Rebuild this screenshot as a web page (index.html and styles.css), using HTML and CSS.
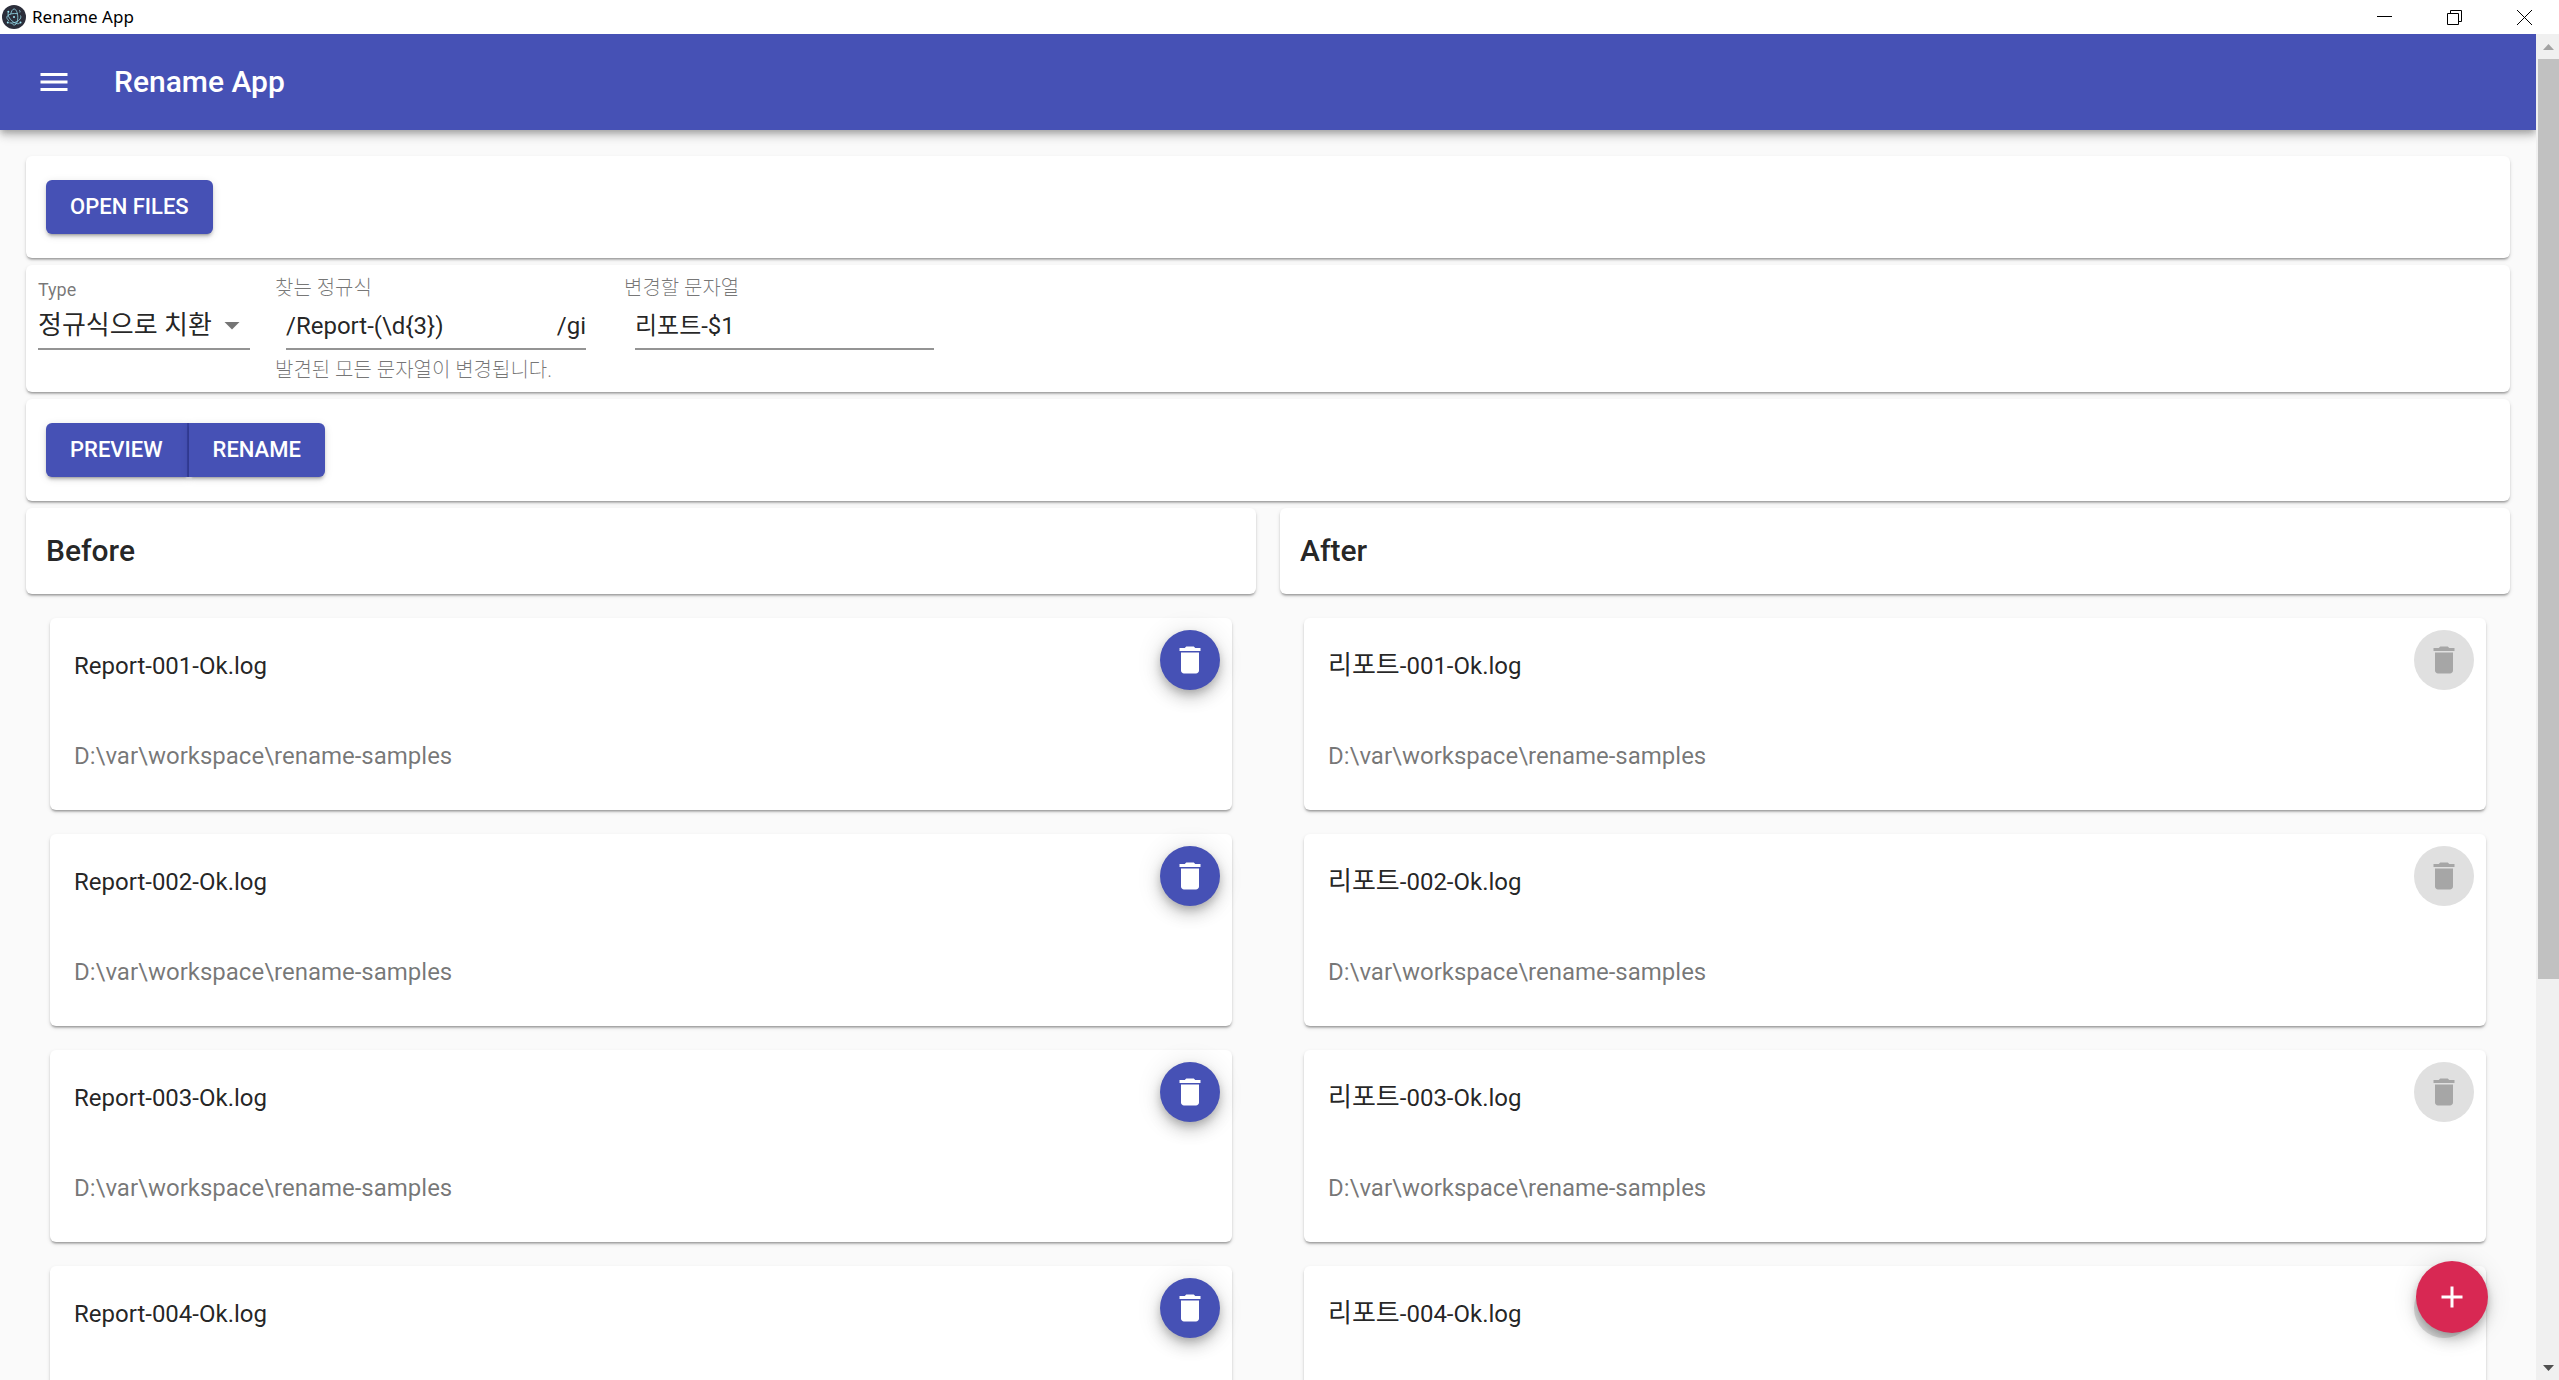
FILE: index.html
```html
<!DOCTYPE html>
<html lang="ko">
<head>
<meta charset="utf-8">
<title>Rename App</title>
<link rel="stylesheet" href="styles.css">
</head>
<body>
<svg class="sprite" aria-hidden="true">
  <symbol id="trash" viewBox="0 0 24 24"><path d="M6 19c0 1.100.9 2 2 2h8c1.100 0 2-.9 2-2V7H6v12zM19 4h-3.500l-1-1h-5l-1 1H5v2h14V4z"/></symbol>
</svg>
<div class="titlebar">
  <svg class="app-icon" viewBox="0 0 24 24" aria-hidden="true">
    <circle cx="12" cy="12" r="12" fill="#2b2e3a"/>
    <g fill="none" stroke="#9feaf9" stroke-opacity=".75" stroke-width="1">
      <path d="M15.500 8.700C11.500 8 7.200 8.900 5.300 11c-1.100 1.400-.2 3.400 1.900 5"/>
      <path d="M6.300 7.500C5 10.600 8.500 15.600 13 18c2 .9 3.800 1 4.600.2"/>
      <path d="M18.500 10.500c1.200 2.200-.8 4.900-4.500 6.500-2.200.9-4.600 1.100-6.500.9"/>
      <path d="M8.700 9.200c.7-3.300 2-5.200 3.400-5.200 2 0 3.700 4 3.700 8.500 0 4-1.500 7.500-3.500 7.500-1 0-1.900-.7-2.600-2"/>
      <path d="M17.800 7.500c.5-1.200.2-2-.6-2.200"/>
    </g>
    <g fill="#9feaf9"><circle cx="12" cy="12" r="1"/><circle cx="6.300" cy="6.800" r="1"/><circle cx="18.500" cy="17.500" r="1"/><circle cx="5.800" cy="17.500" r="1"/></g>
  </svg>
  <span class="titlebar-text">Rename App</span>
  <div class="window-controls">
    <button type="button" aria-label="Minimize"><svg width="15" height="15" viewBox="0 0 15 15"><path d="M0 6.500h15"/></svg></button>
    <button type="button" aria-label="Restore"><svg width="15" height="15" viewBox="0 0 15 15"><path d="M.5 3.500h11v11H.5zM3.500 3.500v-3h11v11h-3"/></svg></button>
    <button type="button" aria-label="Close"><svg width="15" height="15" viewBox="0 0 15 15"><path d="M0 0l15 15M15 0L0 15"/></svg></button>
  </div>
</div>
<div class="window">
  <div class="view">
    <header class="appbar">
      <button type="button" class="menu" aria-label="Menu"><svg width="36" height="36" viewBox="0 0 24 24"><path d="M3 18h18v-2H3v2zm0-5h18v-2H3v2zm0-7v2h18V6H3z"/></svg></button>
      <h1>Rename App</h1>
    </header>
    <main>
      <section class="card actions"><button type="button" class="btn">OPEN FILES</button></section>
      <section class="card form">
        <div class="field type">
          <label for="type">Type</label>
          <div class="select">
            <select id="type"><option>정규식으로 치환</option></select>
            <svg width="36" height="36" viewBox="0 0 24 24" aria-hidden="true"><path d="M7 10l5 5 5-5z"/></svg>
          </div>
        </div>
        <div class="field find">
          <label for="find" class="ko">찾는 정규식</label>
          <div class="input"><span>/</span><input id="find" type="text" value="Report-(\d{3})"><span>/gi</span></div>
          <p class="ko">발견된 모든 문자열이 변경됩니다.</p>
        </div>
        <div class="field replace">
          <label for="replace" class="ko">변경할 문자열</label>
          <div class="input"><input id="replace" type="text" value="리포트-$1"></div>
        </div>
      </section>
      <section class="card actions"><div class="group"><button type="button" class="btn">PREVIEW</button><button type="button" class="btn">RENAME</button></div></section>
      <div class="columns">
        <section class="column">
          <h2 class="card">Before</h2>
          <ul>
            <li class="card item"><h3>Report-001-Ok.log</h3><p>D:\var\workspace\rename-samples</p><button type="button" class="delete" aria-label="Delete"><svg><use href="#trash"/></svg></button></li>
            <li class="card item"><h3>Report-002-Ok.log</h3><p>D:\var\workspace\rename-samples</p><button type="button" class="delete" aria-label="Delete"><svg><use href="#trash"/></svg></button></li>
            <li class="card item"><h3>Report-003-Ok.log</h3><p>D:\var\workspace\rename-samples</p><button type="button" class="delete" aria-label="Delete"><svg><use href="#trash"/></svg></button></li>
            <li class="card item"><h3>Report-004-Ok.log</h3><button type="button" class="delete" aria-label="Delete"><svg><use href="#trash"/></svg></button></li>
          </ul>
        </section>
        <section class="column">
          <h2 class="card">After</h2>
          <ul>
            <li class="card item"><h3><span class="hangul">리포트</span>-001-Ok.log</h3><p>D:\var\workspace\rename-samples</p><button type="button" class="delete" aria-label="Delete" disabled><svg><use href="#trash"/></svg></button></li>
            <li class="card item"><h3><span class="hangul">리포트</span>-002-Ok.log</h3><p>D:\var\workspace\rename-samples</p><button type="button" class="delete" aria-label="Delete" disabled><svg><use href="#trash"/></svg></button></li>
            <li class="card item"><h3><span class="hangul">리포트</span>-003-Ok.log</h3><p>D:\var\workspace\rename-samples</p><button type="button" class="delete" aria-label="Delete" disabled><svg><use href="#trash"/></svg></button></li>
            <li class="card item"><h3><span class="hangul">리포트</span>-004-Ok.log</h3><button type="button" class="delete" aria-label="Delete" disabled><svg><use href="#trash"/></svg></button></li>
          </ul>
        </section>
      </div>
    </main>
  </div>
  <div class="scrollbar" aria-hidden="true">
    <svg class="up" width="11" height="6" viewBox="0 0 11 6"><path d="M0 6l5.500-6L11 6z"/></svg>
    <div class="track"><div class="thumb"></div></div>
    <svg class="down" width="11" height="6" viewBox="0 0 11 6"><path d="M0 0h11L5.500 6z"/></svg>
  </div>
</div>
<button type="button" class="fab" aria-label="Add"><svg width="36" height="36" viewBox="0 0 24 24"><path d="M19 13h-6v6h-2v-6H5v-2h6V5h2v6h6v2z"/></svg></button>
</body>
</html>
```
FILE: styles.css
```css
* { box-sizing: border-box; }

body {
  margin: 0;
  height: 100vh;
  overflow: hidden;
  display: flex;
  flex-direction: column;
  background: #fafafa;
  color: rgba(0, 0, 0, .87);
  font: 24px/36px Roboto, "Noto Sans CJK KR", sans-serif;
}

h1, h2, h3, p, ul { margin: 0; padding: 0; font: inherit; list-style: none; }
button, input, select { font: inherit; color: inherit; border: 0; margin: 0; padding: 0; background: none; }
button { cursor: pointer; }
.sprite { display: none; }

.titlebar { flex: none; height: 34px; display: flex; align-items: center; background: #fff; color: #000; }
.app-icon { width: 24px; height: 24px; margin: 0 6px 0 2px; }
.titlebar-text { font: 17px/24px "Noto Sans", sans-serif; }
.window-controls { margin-left: auto; display: flex; }
.window-controls button { width: 70px; height: 32px; display: flex; align-items: center; justify-content: center; }
.window-controls svg { fill: none; stroke: #000; stroke-width: 1; }

.window { flex: 1; min-height: 0; display: flex; }
.view { flex: 1; min-width: 0; overflow: hidden; }

.appbar {
  height: 96px;
  display: flex;
  align-items: center;
  gap: 42px;
  padding: 0 36px;
  background: #4651b5;
  color: #fff;
  box-shadow: 0 3px 6px -1px rgba(0, 0, 0, .2), 0 6px 8px 0 rgba(0, 0, 0, .14), 0 2px 15px 0 rgba(0, 0, 0, .12);
}
.menu { display: flex; fill: #fff; }
h1 { font-size: 30px; font-weight: 500; }

main { padding: 26px; display: flex; flex-direction: column; gap: 7px; }

.card {
  background: #fff;
  border-radius: 6px;
  box-shadow: 0 3px 2px -2px rgba(0, 0, 0, .2), 0 2px 2px 0 rgba(0, 0, 0, .14), 0 2px 4px 0 rgba(0, 0, 0, .12);
}

.actions { padding: 24px 20px; display: flex; }
.btn {
  height: 54px;
  padding: 0 24px;
  border-radius: 6px;
  background: #4651b5;
  color: #fff;
  font-size: 22px;
  font-weight: 500;
  box-shadow: 0 4px 2px -3px rgba(0, 0, 0, .2), 0 3px 3px 0 rgba(0, 0, 0, .14), 0 2px 8px 0 rgba(0, 0, 0, .12);
}
.group { display: flex; }
.group .btn:first-child { border-right: 2px solid #3640a0; border-radius: 6px 0 0 6px; }
.group .btn:last-child { border-radius: 0 6px 6px 0; }

.form { height: 127px; padding: 11px 12px; display: flex; align-items: flex-start; }
.field label, .field p { display: block; color: rgba(0, 0, 0, .54); font-size: 18px; line-height: 24px; }
.field .ko { font-size: 20px; font-weight: 300; }
.type { width: 212px; margin-right: 25px; padding-top: 2px; }
.find { width: 311px; margin-right: 38px; }
.replace { width: 310px; }
.select, .input { display: flex; align-items: center; border-bottom: 2px solid #949494; }
.select { position: relative; height: 48px; }
.select select { width: 100%; appearance: none; font-size: 26px; }
.select svg { position: absolute; right: 0; fill: rgba(0, 0, 0, .54); pointer-events: none; }
.input { height: 50px; margin-left: 11px; padding-top: 4px; }
.input input { flex: 1; min-width: 0; width: 100%; outline: 0; }
.field p { padding-top: 8px; }

.columns { display: grid; grid-template-columns: 1fr 1fr; gap: 24px; }
h2 { padding: 25px 20px; font-size: 30px; font-weight: 500; }
ul { padding: 24px; display: grid; gap: 24px; }
.item { position: relative; height: 192px; padding: 24px; display: flex; flex-direction: column; gap: 48px; }
h3 { height: 48px; line-height: 48px; }
.hangul { font-size: 26px; line-height: 36px; }
.item p { color: rgba(0, 0, 0, .54); }
.delete {
  position: absolute;
  top: 12px;
  right: 12px;
  width: 60px;
  height: 60px;
  border-radius: 50%;
  display: flex;
  align-items: center;
  justify-content: center;
  background: #4651b5;
  fill: #fff;
  box-shadow: 0 4px 8px -1px rgba(0, 0, 0, .2), 0 9px 15px 0 rgba(0, 0, 0, .14), 0 2px 27px 0 rgba(0, 0, 0, .12);
}
.delete svg { width: 36px; height: 36px; }
.delete:disabled { background: #e0e0e0; fill: #a6a6a6; box-shadow: none; cursor: default; }

.scrollbar { width: 23px; display: flex; flex-direction: column; align-items: center; background: #f0f0f0; padding-left: 2px; }
.scrollbar svg { flex: none; margin: 10px 0 9px; fill: #a3a3a3; }
.scrollbar .down { fill: #505050; }
.track { flex: 1; width: 100%; }
.thumb { height: 71%; background: #c1c1c1; }

.fab {
  position: fixed;
  right: 71px;
  bottom: 47px;
  width: 72px;
  height: 72px;
  border-radius: 50%;
  display: flex;
  align-items: center;
  justify-content: center;
  background: #d82853;
  fill: #fff;
  box-shadow: 0 4px 8px -1px rgba(0, 0, 0, .2), 0 9px 15px 0 rgba(0, 0, 0, .14), 0 2px 27px 0 rgba(0, 0, 0, .12);
}
```
